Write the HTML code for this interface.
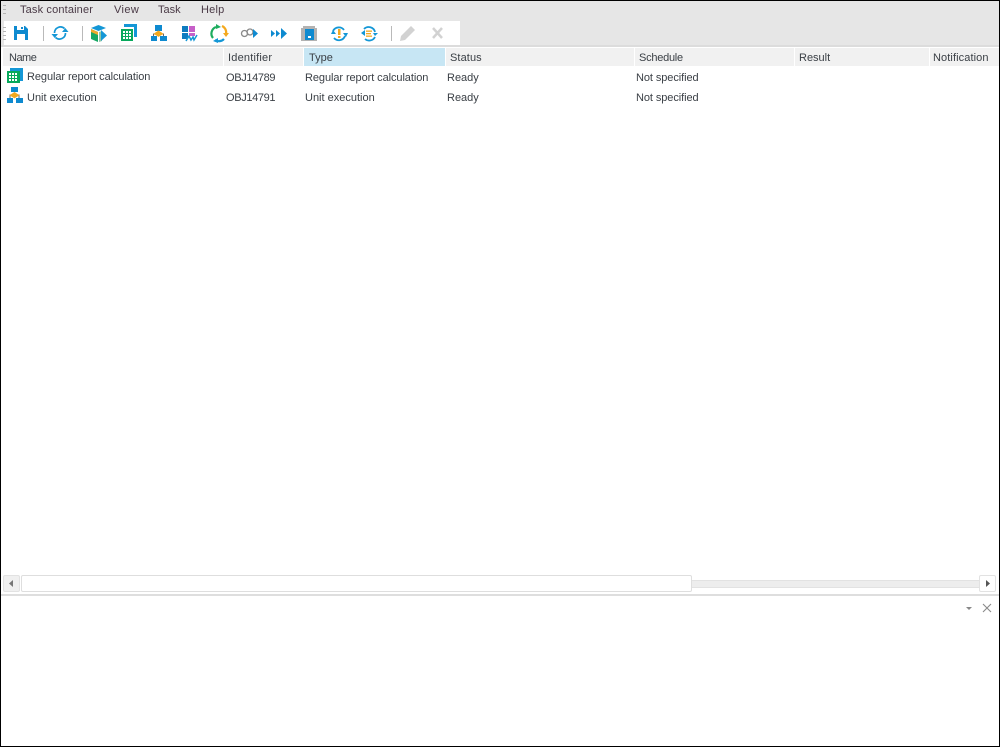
<!DOCTYPE html>
<html><head><meta charset="utf-8"><style>
html,body{margin:0;padding:0;background:#fff}
#p{position:relative;width:1000px;height:747px;overflow:hidden;background:#fff;font-family:"Liberation Sans",sans-serif;font-size:11px;color:#3a3f45}
#p div{position:absolute}
.t{white-space:nowrap;line-height:14px;height:14px}
.m{color:#4a3a46;top:3px}
svg{position:absolute;overflow:visible}
</style></head><body><div id="p">
<div style="left:0;top:1px;width:1000px;height:20px;background:#e6e6e6"></div>
<div style="left:0;top:21px;width:1000px;height:26px;background:#e6e6e6"></div>
<div style="left:4px;top:21px;width:456px;height:24px;background:#fff"></div>
<div style="left:1px;top:45px;width:998px;height:2px;background:#dcdcdc"></div>
<div style="left:1px;top:47px;width:998px;height:1px;background:#fff"></div>
<div class="t m" style="left:20px;letter-spacing:.15px">Task container</div>
<div class="t m" style="left:114px;letter-spacing:.4px">View</div>
<div class="t m" style="left:158px">Task</div>
<div class="t m" style="left:201px;letter-spacing:.2px">Help</div>
<svg style="left:0;top:0" width="1000" height="747">
<g fill="#b5b5b5"><rect x="3" y="5" width="3" height="1"/><rect x="3" y="9" width="3" height="1"/><rect x="3" y="13" width="3" height="1"/>
<rect x="3" y="27" width="3" height="1"/><rect x="3" y="31" width="3" height="1"/><rect x="3" y="35" width="3" height="1"/><rect x="3" y="39" width="3" height="1"/></g>
<path d="M14 26h11l3 3v11H14z" fill="#0e8ad0"/><rect x="17" y="26" width="7" height="4" fill="#fff"/><rect x="21" y="27" width="2" height="2" fill="#0e8ad0"/><rect x="17" y="34" width="8" height="6" fill="#fff"/>
<rect x="43" y="26" width="1" height="15" fill="#b9b9b9"/><rect x="82" y="26" width="1" height="15" fill="#b9b9b9"/><rect x="391" y="26" width="1" height="15" fill="#b9b9b9"/>
<g fill="none" stroke="#1497d6" stroke-width="1.700"><path d="M54.500 33a6 6 0 0 1 10-4.500"/><path d="M65.500 33a6 6 0 0 1-10 4.500"/></g><path d="M62 32h6.500l-3.200-4zM58 34h-6.500l3.200 4z" fill="#1497d6"/>
<path d="M98.500 25l7.500 3-7.500 3-7.500-3z" fill="#1497d6"/><path d="M91 29l7 3v10l-7-3z" fill="#16a864"/><path d="M91 29l7 3v3l-7-3z" fill="#f0a92b"/><path d="M99 32l3-1v10l-3 1z" fill="#8fc7a8"/><path d="M101 30l6 5.500-6 5.500z" fill="#1497d6"/>
<path d="M124 24h13v13h-3v-10h-10z" fill="#1497d6"/><rect x="121" y="29" width="12" height="12" fill="#07a95c"/><g fill="#fff"><rect x="123" y="31" width="2" height="2"/><rect x="126" y="31" width="2" height="2"/><rect x="129" y="31" width="2" height="2"/><rect x="123" y="34" width="2" height="2"/><rect x="126" y="34" width="2" height="2"/><rect x="129" y="34" width="2" height="2"/><rect x="123" y="37" width="2" height="2"/><rect x="126" y="37" width="2" height="2"/><rect x="129" y="37" width="2" height="2"/></g>
<rect x="155" y="25" width="7" height="6" fill="#0e8ad0"/><path d="M153.500 37v-3h10v3" fill="none" stroke="#666" stroke-width="1"/><path d="M158.500 30.500l5 3.200-5 3.200-5-3.200z" fill="#f4a91f"/><rect x="151" y="36" width="6" height="5" fill="#0e8ad0"/><rect x="160" y="36" width="7" height="5" fill="#0e8ad0"/>
<rect x="182" y="26" width="6" height="6" fill="#0e7cc0"/><rect x="189" y="26" width="6" height="6" fill="#c65fc8"/><rect x="182" y="33" width="6" height="6" fill="#0e7cc0"/><rect x="189" y="33" width="6" height="3" fill="#c65fc8"/><path d="M186 41l3-5 2 4 2-3 1 3 3-5" fill="none" stroke="#1497d6" stroke-width="1.500"/>
<path d="M213 38a7 7 0 0 1 3-11" fill="none" stroke="#1dac5e" stroke-width="2.200"/><path d="M216 24l5 3-5 2z" fill="#1dac5e"/><path d="M222 26a7 7 0 0 1 4 8" fill="none" stroke="#f4a91f" stroke-width="2.200"/><path d="M223 33h6l-3 4z" fill="#f4a91f"/><path d="M224 39a7 7 0 0 1-9 1" fill="none" stroke="#1497d6" stroke-width="2.200"/><path d="M218 38v5l-5-2z" fill="#1497d6"/>
<g fill="none" stroke="#8a8a8a" stroke-width="1.300"><circle cx="244.500" cy="33.500" r="3"/><circle cx="250" cy="32" r="3"/></g><path d="M253 29l5 4.500-5 4.500z" fill="#0e8ad0"/>
<path d="M271 30l4 3.500-4 3.500zM276 30l4 3.500-4 3.500zM281 28l6 5.500-6 5.500z" fill="#0e8ad0"/>
<rect x="301" y="28" width="16" height="13" fill="#b2b2b2"/><rect x="303" y="26" width="12" height="2" fill="#b2b2b2"/><rect x="305" y="29" width="9" height="11" fill="#0e8ad0"/><rect x="308" y="36" width="3" height="2" fill="#fff"/>
<g fill="none" stroke="#1497d6" stroke-width="1.800"><path d="M333 31a6.500 6.500 0 0 1 11-1"/><path d="M345 36a6.500 6.500 0 0 1-11 2"/></g><path d="M331 34h5l-3-4zM343 33h5l-2 4z" fill="#1497d6"/><rect x="338" y="29" width="2.500" height="6" fill="#f4a91f"/><rect x="338" y="36" width="2.500" height="2" fill="#f4a91f"/>
<g fill="none" stroke="#1497d6" stroke-width="1.800"><path d="M364 29a6.500 6.500 0 0 1 11 3"/><path d="M375 37a6.500 6.500 0 0 1-10 2"/></g><path d="M361 33l4-3v6zM378 33l-3 3-2-3z" fill="#1497d6"/><g fill="#f4a91f"><rect x="366" y="30.500" width="6" height="1.300"/><rect x="366" y="33" width="5" height="1.300"/><rect x="366" y="35.500" width="6" height="1.300"/></g>
<path d="M401 36l10-10 4 4-10 10-5 1z" fill="#d2d2d2"/>
<path d="M433 28l9 10M442 28l-9 10" stroke="#d2d2d2" stroke-width="2.500" fill="none"/>
</svg>
<div style="left:3px;top:48px;width:220px;height:18px;background:#f1f1f1"></div>
<div style="left:224px;top:48px;width:79px;height:18px;background:#f1f1f1"></div>
<div style="left:304px;top:48px;width:141px;height:18px;background:#c7e6f4"></div>
<div style="left:446px;top:48px;width:188px;height:18px;background:#f1f1f1"></div>
<div style="left:635px;top:48px;width:159px;height:18px;background:#f1f1f1"></div>
<div style="left:795px;top:48px;width:134px;height:18px;background:#f1f1f1"></div>
<div style="left:930px;top:48px;width:69px;height:18px;background:#f1f1f1"></div>
<div class="t" style="left:9px;top:51px;letter-spacing:-.5px">Name</div>
<div class="t" style="left:228px;top:51px;letter-spacing:.2px">Identifier</div>
<div class="t" style="left:309px;top:51px">Type</div>
<div class="t" style="left:450px;top:51px;letter-spacing:.1px">Status</div>
<div class="t" style="left:639px;top:51px;letter-spacing:-.25px">Schedule</div>
<div class="t" style="left:799px;top:51px">Result</div>
<div class="t" style="left:933px;top:51px;letter-spacing:.1px">Notification</div>
<svg style="left:0;top:0" width="1000" height="110">
<path d="M10 68h13v13h-3v-10H10z" fill="#1497d6"/><rect x="7" y="71" width="13" height="12" fill="#07a95c"/><g fill="#fff"><rect x="9" y="73" width="2" height="2"/><rect x="12" y="73" width="2" height="2"/><rect x="15" y="73" width="2" height="2"/><rect x="9" y="76" width="2" height="2"/><rect x="12" y="76" width="2" height="2"/><rect x="15" y="76" width="2" height="2"/><rect x="9" y="79" width="2" height="2"/><rect x="12" y="79" width="2" height="2"/><rect x="15" y="79" width="2" height="2"/></g>
<rect x="11" y="87" width="7" height="5" fill="#0e8ad0"/><path d="M10 98v-3h9v3" fill="none" stroke="#666"/><path d="M14.500 92l5 3.200-5 3.200-5-3.200z" fill="#f4a91f"/><rect x="7" y="98" width="6" height="5" fill="#0e8ad0"/><rect x="16" y="98" width="7" height="5" fill="#0e8ad0"/>
</svg>
<div class="t" style="left:27px;top:70px;letter-spacing:-.08px">Regular report calculation</div>
<div class="t" style="left:226px;top:71px;letter-spacing:-.35px">OBJ14789</div>
<div class="t" style="left:305px;top:71px;letter-spacing:-.08px">Regular report calculation</div>
<div class="t" style="left:447px;top:71px">Ready</div>
<div class="t" style="left:636px;top:71px;letter-spacing:-.08px">Not specified</div>
<div class="t" style="left:27px;top:91px">Unit execution</div>
<div class="t" style="left:226px;top:91px;letter-spacing:-.35px">OBJ14791</div>
<div class="t" style="left:305px;top:91px">Unit execution</div>
<div class="t" style="left:447px;top:91px">Ready</div>
<div class="t" style="left:636px;top:91px;letter-spacing:-.08px">Not specified</div>
<div style="left:22px;top:580px;width:958px;height:6px;background:#ededed;border-top:1px solid #e2e2e2;border-bottom:1px solid #e2e2e2"></div>
<div style="left:3px;top:575px;width:15px;height:15px;background:#f0f0f0;border:1px solid #e2e2e2;border-radius:2px"></div>
<div style="left:21px;top:575px;width:669px;height:15px;background:#fff;border:1px solid #dedede;border-radius:2px"></div>
<div style="left:979px;top:575px;width:15px;height:15px;background:#fff;border:1px solid #e2e2e2;border-radius:2px"></div>
<svg style="left:0;top:570px" width="1000" height="60">
<path d="M13 10v7l-4-3.500z" fill="#777"/><path d="M986 10v7l4-3.500z" fill="#555"/>
<path d="M966 37h6l-3 3z" fill="#888"/>
<path d="M983 34l8 8M991 34l-8 8" stroke="#8a8a8a" stroke-width="1.100" fill="none"/>
</svg>
<div style="left:1px;top:594px;width:998px;height:2px;background:#dedede"></div>
<div style="left:0;top:0;width:1000px;height:1px;background:#000"></div>
<div style="left:0;top:746px;width:1000px;height:1px;background:#000"></div>
<div style="left:0;top:0;width:1px;height:747px;background:#000"></div>
<div style="left:999px;top:0;width:1px;height:747px;background:#000"></div>
</div></body></html>
